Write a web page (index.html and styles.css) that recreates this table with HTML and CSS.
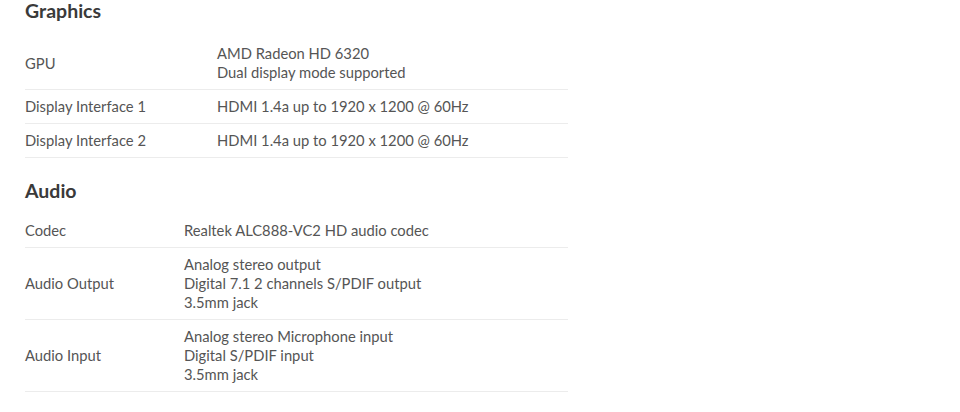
FILE: index.html
```html
<!DOCTYPE html>
<html>
<head>
<meta charset="utf-8">
<link rel="stylesheet" href="styles.css">
</head>
<body>
<div class="specs">
  <h2 class="section-title first">Graphics</h2>
  <table class="spec-table graphics">
    <tr><td class="label">GPU</td><td class="value">AMD Radeon HD 6320<br>Dual display mode supported</td></tr>
    <tr><td class="label">Display Interface 1</td><td class="value">HDMI 1.4a up to 1920 x 1200 @ 60Hz</td></tr>
    <tr><td class="label">Display Interface 2</td><td class="value">HDMI 1.4a up to 1920 x 1200 @ 60Hz</td></tr>
  </table>
  <h2 class="section-title">Audio</h2>
  <table class="spec-table audio">
    <tr><td class="label">Codec</td><td class="value">Realtek ALC888-VC2 HD audio codec</td></tr>
    <tr><td class="label">Audio Output</td><td class="value">Analog stereo output<br>Digital 7.1 2 channels S/PDIF output<br>3.5mm jack</td></tr>
    <tr><td class="label">Audio Input</td><td class="value">Analog stereo Microphone input<br>Digital S/PDIF input<br>3.5mm jack</td></tr>
  </table>
</div>
</body>
</html>
```
FILE: styles.css
```css
html, body {
  margin: 0;
  padding: 0;
  background: #fff;
}
body {
  font-family: Lato, "Open Sans", sans-serif;
  color: #555;
}
.specs {
  padding-left: 25px;
  width: 543px;
}
.section-title {
  margin: 20px 0 10px;
  font-size: 19.5px;
  line-height: 26px;
  font-weight: 700;
  color: #3a3a3a;
}
.section-title.first {
  margin-top: -2px;
  margin-bottom: 13px;
}
.spec-table {
  width: 100%;
  border-collapse: collapse;
  font-size: 14.75px;
  line-height: 19px;
}
.spec-table td {
  padding: 7px 0;
  border-bottom: 1px solid #ececec;
  vertical-align: middle;
}
.graphics .label { width: 192px; }
.audio .label { width: 159px; }
```
